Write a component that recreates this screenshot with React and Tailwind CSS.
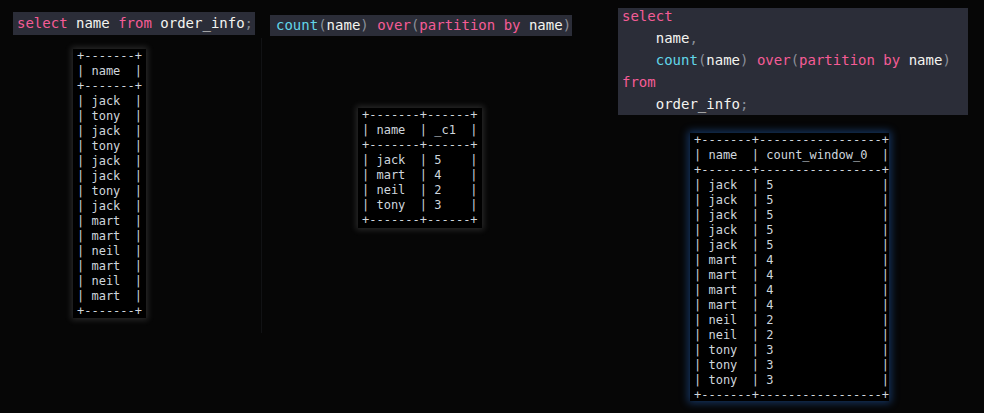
import React from "react";

const mono = { fontFamily: '"DejaVu Sans Mono", "Liberation Mono", monospace' };

const K = ({ children }) => <span className="text-[#f55c96]">{children}</span>;
const F = ({ children }) => <span className="text-[#62d6e8]">{children}</span>;
const P = ({ children }) => <span className="text-[#8a8f98]">{children}</span>;

const CountOver = () => (
  <>
    <F>count</F><P>(</P>name<P>)</P> <K>over</K><P>(</P><K>partition</K> <K>by</K> name<P>)</P>
  </>
);

const Table = ({ lines, className }) => (
  <pre
    className={`bg-black text-[#cfd6dd] text-[12px] leading-[15px] px-[4px] ${className}`}
    style={mono}
  >
    {lines.join("\n")}
  </pre>
);

const names = ["jack", "tony", "jack", "tony", "jack", "jack", "tony", "jack", "mart", "mart", "neil", "mart", "neil", "mart"];
const table1 = [
  "+-------+",
  "| name  |",
  "+-------+",
  ...names.map((n) => `| ${n}  |`),
  "+-------+",
];

const grouped = [["jack", 5], ["mart", 4], ["neil", 2], ["tony", 3]];
const table2 = [
  "+-------+------+",
  "| name  | _c1  |",
  "+-------+------+",
  ...grouped.map(([n, c]) => `| ${n}  | ${c}    |`),
  "+-------+------+",
];

const windowed = grouped.flatMap(([n, c]) => Array.from({ length: c }, () => [n, c]));
const table3 = [
  "+-------+-----------------+",
  "| name  | count_window_0  |",
  "+-------+-----------------+",
  ...windowed.map(([n, c]) => `| ${n}  | ${c}               |`),
  "+-------+-----------------+",
];

export default function App() {
  return (
    <div className="w-[984px] h-[413px] bg-[#060606] flex overflow-hidden text-[#f4f4f0]" style={mono}>
      {/* left */}
      <div className="w-[261px] pl-[13px] pt-[12px] flex flex-col items-start">
        <div className="bg-[#2b2d38] h-[23px] leading-[23px] px-[4px] text-[14px] w-[242px] whitespace-pre">
          <K>select</K> name <K>from</K> order_info<P>;</P>
        </div>
        <Table lines={table1} className="ml-[60px] mt-[14px] h-[269px] shadow-[0_0_6px_2px_rgba(200,200,200,0.18)]" />
      </div>

      <div className="w-px bg-[#111214] mt-[38px] h-[295px]" />

      {/* middle */}
      <div className="w-[356px] pl-[8px] pt-[15px] flex flex-col items-start">
        <div className="bg-[#2b2d38] h-[21px] leading-[21px] px-[6px] text-[14px] w-[302px] whitespace-pre">
          <CountOver />
        </div>
        <Table lines={table2} className="ml-[88px] mt-[72px] h-[120px] w-[124px] shadow-[0_0_6px_2px_rgba(200,200,200,0.18)]" />
      </div>

      {/* right */}
      <div className="flex-1 pt-[8px] flex flex-col items-start">
        <div className="bg-[#2b2d38] w-[350px] h-[107px] pl-[4px] text-[14px] leading-[22px] whitespace-pre">
          <div className="-mt-[3px]">
            <div><K>select</K></div>
            <div>{"    "}name<P>,</P></div>
            <div>{"    "}<CountOver /></div>
            <div><K>from</K></div>
            <div>{"    "}order_info<P>;</P></div>
          </div>
        </div>
        <Table lines={table3} className="ml-[72px] mt-[18px] h-[268px] w-[199px] shadow-[0_0_8px_2px_rgba(40,110,210,0.45)]" />
      </div>
    </div>
  );
}
